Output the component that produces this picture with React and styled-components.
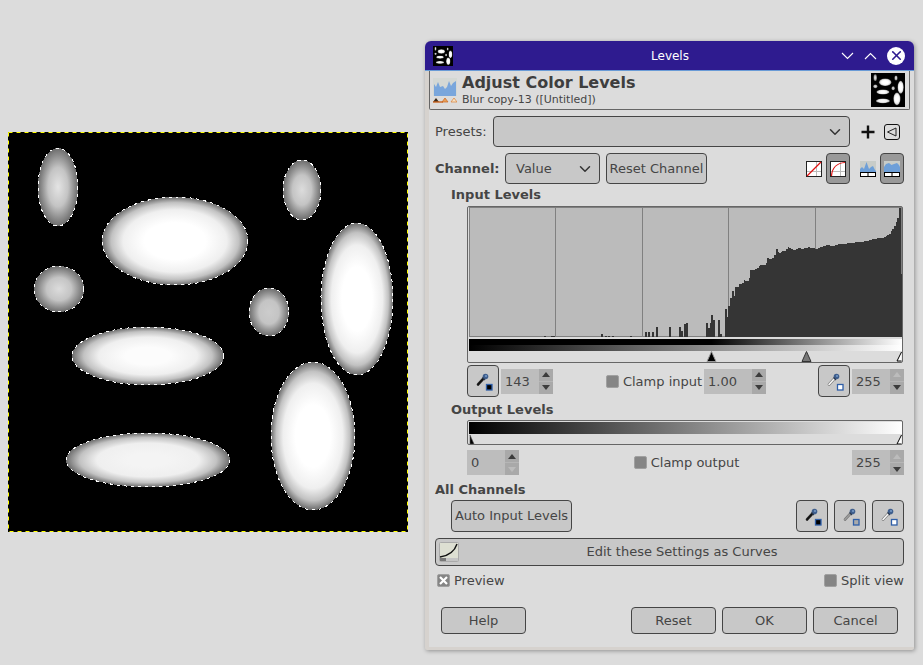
import React from "react";
import styled, { createGlobalStyle } from "styled-components";
import { LuChevronDown, LuX } from "react-icons/lu";

const GlobalStyle = createGlobalStyle`
  html, body {
    margin: 0;
    height: 100%;
    background: #dcdcdc;
    font-family: "DejaVu Sans", sans-serif;
    font-size: 13px;
    color: #454545;
  }
`;

const Desktop = styled.div`
  display: flex;
  align-items: flex-start;
  width: 923px;
  height: 665px;
  overflow: hidden;
`;

const CanvasWrap = styled.div`
  margin: 132px 17px 0 8px;
  width: 400px;
  height: 400px;
  flex: none;
`;

const Window = styled.div`
  margin-top: 41px;
  width: 489px;
  flex: none;
  box-sizing: border-box;
  background: #dcdcdc;
  border-left: 4px solid #d6d2ce;
  border-bottom: 3px solid #d6d2ce;
  border-radius: 6px 6px 2px 2px;
  box-shadow: 1px 1px 4px rgba(0, 0, 0, 0.35);
`;

const TitleBar = styled.div`
  display: grid;
  grid-template-columns: 1fr auto 1fr;
  align-items: center;
  height: 29px;
  margin-left: -4px;
  padding: 0 9px 0 8px;
  background: #2e1b8f;
  border-bottom: 1px solid #6a9bd6;
  border-radius: 6px 6px 0 0;
  color: #fff;
  font-size: 12px;
`;

const TitleIcon = styled.div`
  width: 20px;
  height: 20px;
  display: flex;
`;

const TitleText = styled.div`
  padding-left: 2px;
`;

const TitleControls = styled.div`
  display: flex;
  justify-content: flex-end;
  align-items: center;
  gap: 10px;

  svg {
    display: block;
  }
`;

const CloseDot = styled.span`
  width: 18px;
  height: 18px;
  border-radius: 50%;
  background: #fff;
  color: #2e1b8f;
  display: flex;
  align-items: center;
  justify-content: center;
  font-size: 15px;
`;

const Header = styled.div`
  display: flex;
  align-items: center;
  height: 39px;
  width: 481px;
  box-sizing: border-box;
  padding: 0 4px 0 3px;
  border: 1px solid #666;
  border-top: none;
  border-radius: 0 0 2px 2px;
`;

const HeaderText = styled.div`
  flex: 1;
  margin-left: 5px;
`;

const HeaderTitle = styled.div`
  font-size: 16px;
  font-weight: bold;
  line-height: 17px;
  margin-bottom: 2px;
  color: #3e3e3e;
`;

const HeaderSub = styled.div`
  font-size: 11px;
  line-height: 13px;
`;

const Content = styled.div`
  width: 481px;
  box-sizing: border-box;
  padding: 0 6px;
`;

const Row = styled.div`
  display: flex;
  align-items: center;
  justify-content: ${(p) => p.$justify || "flex-start"};
  gap: ${(p) => p.$gap || 0}px;
  margin-top: ${(p) => p.$top || 0}px;
  margin-left: ${(p) => p.$left || 0}px;
  padding: ${(p) => p.$pad || "0"};
  height: ${(p) => p.$h}px;
`;

const Group = styled.div`
  display: flex;
  align-items: center;
  gap: ${(p) => p.$gap || 0}px;
  margin-left: ${(p) => p.$left || 0}px;
`;

const BoldLabel = styled.div`
  font-weight: bold;
  line-height: 16px;
  height: 16px;
  flex: none;
  width: ${(p) => (p.$w ? `${p.$w}px` : "auto")};
  margin-top: ${(p) => p.$top || 0}px;
  margin-bottom: ${(p) => p.$bottom || 0}px;
  margin-left: ${(p) => p.$left || 0}px;
`;

const Combo = styled.div`
  display: flex;
  align-items: center;
  justify-content: space-between;
  box-sizing: border-box;
  width: ${(p) => p.$w}px;
  height: 31px;
  padding: 0 5px 0 10px;
  margin-left: ${(p) => p.$left || 0}px;
  background: #c8c8c8;
  border: 1px solid #454545;
  border-radius: 4px;
  color: #333;
  font-size: 18px;

  span {
    font-size: 13px;
    color: #454545;
  }
`;

const Btn = styled.div`
  display: flex;
  align-items: center;
  justify-content: center;
  box-sizing: border-box;
  width: ${(p) => p.$w}px;
  height: ${(p) => p.$h || 32}px;
  margin-left: ${(p) => p.$left || 0}px;
  padding-bottom: ${(p) => p.$lift || 0}px;
  background: #c8c8c8;
  border: 1px solid #454545;
  border-radius: 4px;
  white-space: nowrap;
`;

const ToggleBtn = styled(Btn)`
  width: 24px;
  height: 31px;
  background: #999;
`;

const SmallSquare = styled.div`
  width: 16px;
  height: 16px;
  margin-left: 8px;
  box-sizing: border-box;
  border: 1px solid #111;
  border-radius: 3px;
  display: flex;
`;

const LevelFrame = styled.div`
  margin-top: ${(p) => p.$top}px;
  margin-left: 32px;
  box-sizing: border-box;
  width: 436px;
  height: ${(p) => p.$h}px;
  padding: ${(p) => p.$pad || 0}px 0 0 1px;
  border: 1px solid #666;
  border-radius: 2px;
  display: flex;
  flex-direction: column;
`;

const Ramp = styled.div`
  width: 433px;
  height: 12px;
  flex: none;
  margin-top: ${(p) => p.$top || 0}px;
  background: ${(p) =>
    p.$split
      ? "linear-gradient(90deg,#000 56%,#fff 100%) top/100% 50% no-repeat,linear-gradient(90deg,#000,#fff) bottom/100% 50% no-repeat"
      : "linear-gradient(90deg,#000,#fff)"};
`;

const Spin = styled.div`
  display: flex;
  box-sizing: border-box;
  width: ${(p) => p.$w || 52}px;
  height: 25px;
  background: #bdbdbd;
`;

const SpinValue = styled.div`
  flex: 1;
  padding-left: 4px;
  line-height: 25px;
`;

const SpinArrows = styled.div`
  width: 14px;
  background: #a9a9a9;
  display: flex;
  flex-direction: column;
`;

const SpinArrow = styled.div`
  flex: 1;
  display: flex;
  align-items: center;
  justify-content: center;

  &::before {
    content: "";
    border-left: 4px solid transparent;
    border-right: 4px solid transparent;
    ${(p) => (p.$dir === "up" ? "border-bottom" : "border-top")}: 5px solid
      ${(p) => (p.$off ? "#bcbcbc" : "#3c3c3c")};
  }

  & + & {
    border-top: 1px solid #b6b6b6;
  }
`;

const Check = styled.span`
  width: 13px;
  height: 13px;
  box-sizing: border-box;
  flex: none;
  background: #858585;
  border: 1px solid #a0a0a0;
  border-radius: 2px;
  display: flex;
  align-items: center;
  justify-content: center;
`;

const CheckLabel = styled.label`
  display: flex;
  align-items: center;
  gap: 4px;
  margin-left: ${(p) => p.$left || 0}px;
`;

const EditIcon = styled.div`
  width: 20px;
  height: 20px;
  flex: none;
  margin-left: 3px;
  display: flex;
`;

const EditText = styled.div`
  flex: 1;
  text-align: center;
  padding-left: 2px;
`;

const blobs = [
  [58, 187, 20, 39, "#e4e4e4", 0],
  [175, 241, 73, 44, "#ffffff", 0.42],
  [302, 190, 19, 30, "#dcdcdc", 0],
  [357, 299, 36, 76, "#ffffff", 0.42],
  [59, 289, 25, 23, "#dcdcdc", 0],
  [269, 312, 20, 24, "#cccccc", 0],
  [148, 356, 76, 29, "#fcfcfc", 0.3],
  [313, 436, 42, 74, "#ffffff", 0.42],
  [148, 460, 82, 27, "#f4f4f4", 0.25],
];

function BlobField({ prefix, size, dashed }) {
  return (
    <svg width={size} height={size} viewBox="8 132 400 400" style={{ display: "block" }}>
      <defs>
        {blobs.map(([, , , , peak, flat], i) => (
          <radialGradient key={i} id={`${prefix}${i}`}>
            <stop offset="0" stopColor={peak} />
            <stop offset={flat} stopColor={peak} />
            <stop offset={flat + (1 - flat) * 0.5} stopColor={flat ? "#efefef" : "#c4c4c4"} />
            <stop offset={flat + (1 - flat) * 0.78} stopColor={flat ? "#c2c2c2" : "#929292"} />
            <stop offset="1" stopColor="#6c6c6c" />
          </radialGradient>
        ))}
      </defs>
      <rect x="8" y="132" width="400" height="400" fill="#000" />
      {blobs.map(([cx, cy, rx, ry], i) => (
        <ellipse
          key={i}
          cx={cx}
          cy={cy}
          rx={rx}
          ry={ry}
          fill={`url(#${prefix}${i})`}
          stroke={dashed ? "#fff" : "none"}
          strokeWidth="1"
          strokeDasharray="3 4"
          shapeRendering={dashed ? "crispEdges" : "auto"}
        />
      ))}
      {dashed && (
        <rect
          x="8.5"
          y="132.5"
          width="399"
          height="399"
          fill="none"
          stroke="#ff0"
          strokeWidth="1"
          strokeDasharray="4 4"
        />
      )}
    </svg>
  );
}

// x / top pairs read from the histogram, in 3x crop units
const sparse = [
  [252, 408], [273, 408], [278, 408], [423, 402], [435, 408], [443, 408], [455, 408], [510, 408],
  [555, 396], [565, 396], [575, 396], [587, 381], [627, 381], [657, 381], [663, 393], [672, 372],
  [678, 369], [738, 369], [744, 384], [749, 369], [753, 345], [759, 360], [774, 360], [780, 402],
];
const envelope = [
  [795, 325], [800, 350], [805, 318], [811, 288], [816, 270], [820, 288], [825, 260], [832, 260],
  [835, 252], [845, 252], [847, 238], [855, 242], [863, 242], [868, 228], [871, 210], [885, 210],
  [887, 202], [895, 202], [897, 193], [915, 193], [917, 187], [921, 172], [930, 178], [940, 170],
  [947, 145], [955, 158], [965, 152], [975, 148], [983, 142], [990, 146], [1000, 150], [1010, 145],
  [1030, 146], [1045, 140], [1065, 145], [1080, 140], [1100, 134], [1120, 136], [1150, 132],
  [1175, 130], [1200, 125], [1220, 122], [1240, 116], [1260, 113], [1280, 104], [1295, 90],
  [1305, 70], [1313, 50], [1318, 22],
];

function envelopeAt(x) {
  for (let i = 1; i < envelope.length; i++) {
    if (x <= envelope[i][0]) {
      const [x0, y0] = envelope[i - 1];
      const [x1, y1] = envelope[i];
      return y0 + ((y1 - y0) * (x - x0)) / (x1 - x0 || 1);
    }
  }
  return 22;
}

function Histogram() {
  const bars = [];
  for (let x = 795; x < 1318; x += 5.07) {
    const wobble = x > 950 && x < 1290 ? ((Math.round(x) * 7) % 5) - 2 : 0;
    bars.push([x, envelopeAt(x) + wobble]);
  }
  return (
    <svg
      width="433"
      height="130"
      viewBox="27 20 1299 390"
      preserveAspectRatio="none"
      shapeRendering="crispEdges"
      style={{ display: "block", flex: "none" }}
    >
      <rect x="27" y="20" width="1299" height="390" fill="#bbbbbb" stroke="#808080" strokeWidth="6" />
      {[287, 547, 805, 1066].map((x) => (
        <rect key={x} x={x - 1} y="20" width="3" height="390" fill="#808080" />
      ))}
      {sparse.map(([x, top]) => (
        <rect key={x} x={x} y={top} width="6" height={410 - top} fill="#353535" />
      ))}
      {bars.map(([x, top]) => (
        <rect key={x} x={x} y={top} width="5.4" height={410 - top} fill="#353535" />
      ))}
      <rect x="1318" y="22" width="6" height="388" fill="#353535" />
      <rect x="1324" y="222" width="3" height="188" fill="#353535" />
    </svg>
  );
}

// slider handles under a ramp: filled triangles plus the white one in the corner
function Handles({ items = [], height = 11, blackCorner }) {
  return (
    <svg width="433" height={height} style={{ display: "block", flex: "none" }}>
      {items.map(([x, fill]) => (
        <path
          key={x}
          d={`M${x} ${height - 10.5}L${x + 4.5} ${height - 0.5}H${x - 4.5}Z`}
          fill={fill}
          stroke={fill === "#000" ? "#999" : "#333"}
        />
      ))}
      {blackCorner && <path d="M1 1L5 10H1Z" fill="#000" stroke="#555" strokeWidth="0.6" />}
      <path d="M432.5 1L428 10H432.5" fill="#fff" stroke="#000" />
    </svg>
  );
}

function Dropper({ tone, square }) {
  const body = { black: "#111", grey: "#9a9a9a", white: "#f6f6f6" }[tone];
  return (
    <svg width="24" height="24" viewBox="0 0 24 24">
      <path d="M7 15.5 12.5 9.5" stroke={tone === "black" ? "#333" : "#777"} strokeWidth="2.6" strokeLinecap="round" />
      <path d="M7 15.5 12.5 9.5" stroke={body} strokeWidth="1.6" strokeLinecap="round" />
      <circle cx="14.5" cy="7.5" r="2.8" fill="#3f5f8e" />
      <circle cx="15" cy="7" r="1" fill="#7a9cc8" />
      <path d="M11.5 8.5 14 11" stroke="#2c3a50" strokeWidth="1.3" />
      <rect x="15.5" y="15.5" width="5.5" height="5.5" fill={square} stroke="#2f5fa8" strokeWidth="1.3" />
    </svg>
  );
}

function CurveIcon({ curved }) {
  return (
    <svg width="16" height="16" viewBox="0 0 16 16" shapeRendering={curved ? "auto" : "crispEdges"}>
      <rect x="0.5" y="0.5" width="15" height="15" fill="#fff" stroke="#222" />
      <path d="M10.5 1V15M1 10.5H15" stroke="#bbb" />
      {curved ? (
        <path d="M1.5 15C2 7 7 2 15 1.5" fill="none" stroke="#e01010" strokeWidth="1.2" />
      ) : (
        <path d="M1 15L15 1" stroke="#e01010" strokeWidth="1.3" shapeRendering="auto" />
      )}
    </svg>
  );
}

function HistIcon({ log }) {
  const d = log
    ? "M0 12V6L2 3 5 2 7.5 4 10 3 13 2 15 4 16 6V12Z"
    : "M0 12V8L2 6 4 8 6.5 1 9 8 11 6 13 5 15 9 16 10V12Z";
  return (
    <svg width="16" height="16" viewBox="0 0 16 16">
      <rect width="16" height="12" fill="#c8ccc8" />
      <path d={d} fill="#6d9fd8" />
      <rect x="0.5" y="11.5" width="15" height="4" fill="#fff" stroke="#000" />
      <path d="M8 11V16" stroke="#000" />
    </svg>
  );
}

function LevelsLogo() {
  return (
    <svg width="24" height="25" viewBox="0 0 24 25" style={{ flex: "none" }}>
      <rect width="24" height="18" fill="#d4d8d4" />
      <path d="M1 18V6L3 9 5 4 7 9 10 8 12 11 14 9 16 3 18 8 20 5 23 3V18Z" fill="#79a6dc" />
      <path d="M0 24 3 20 6 24Z" fill="#3a2a1a" />
      <path d="M9 24 12 20 15 24Z" fill="#e9a15a" stroke="#c9641f" strokeWidth="0.7" />
      <path d="M18 24 21 20 24 24Z" fill="#f5e3c8" stroke="#dd8030" strokeWidth="0.7" />
      <path d="M0 24H10" stroke="#c9641f" strokeWidth="1.4" />
    </svg>
  );
}

function CurveSetting() {
  return (
    <svg width="20" height="20" viewBox="0 0 20 20">
      <rect x="0.5" y="0.5" width="19" height="19" rx="1" fill="#dddfd2" stroke="#aaa" />
      <path d="M1 15C8 14 15 11 18 2" fill="none" stroke="#111" strokeWidth="1.4" />
      <rect x="1" y="16" width="18" height="3" fill="#c4c4c4" />
      <rect x="1" y="16" width="6" height="3" fill="#777" />
    </svg>
  );
}

const Chevron = ({ up }) => (
  <svg width="13" height="8" viewBox="0 0 13 8">
    <path d={up ? "M1 7 6.5 1.5 12 7" : "M1 1 6.5 6.5 12 1"} fill="none" stroke="#fff" strokeWidth="1.1" />
  </svg>
);

const SpinBox = ({ value, w, upOff, downOff }) => (
  <Spin $w={w}>
    <SpinValue>{value}</SpinValue>
    <SpinArrows>
      <SpinArrow $dir="up" $off={upOff} />
      <SpinArrow $dir="down" $off={downOff} />
    </SpinArrows>
  </Spin>
);

export default function App() {
  return (
    <Desktop>
      <GlobalStyle />
      <CanvasWrap>
        <BlobField prefix="main" size={400} dashed />
      </CanvasWrap>
      <Window>
        <TitleBar>
          <TitleIcon>
            <BlobField prefix="tiny" size={20} />
          </TitleIcon>
          <TitleText>Levels</TitleText>
          <TitleControls>
            <Chevron />
            <Chevron up />
            <CloseDot>
              <LuX strokeWidth={2.6} />
            </CloseDot>
          </TitleControls>
        </TitleBar>
        <Header>
          <LevelsLogo />
          <HeaderText>
            <HeaderTitle>Adjust Color Levels</HeaderTitle>
            <HeaderSub>Blur copy-13 ([Untitled])</HeaderSub>
          </HeaderText>
          <BlobField prefix="thumb" size={34} />
        </Header>
        <Content>
          <Row $h={31} $top={6}>
            <div>Presets:</div>
            <Combo $w={357} $left={6}>
              <span />
              <LuChevronDown />
            </Combo>
            <svg width="16" height="16" viewBox="0 0 16 16" style={{ marginLeft: 10 }}>
              <path d="M8 1.5V14.5M1.5 8H14.5" stroke="#111" strokeWidth="2.4" />
            </svg>
            <SmallSquare>
              <svg width="14" height="14" viewBox="0 0 14 14">
                <path d="M2.5 7 11 3V11Z" fill="none" stroke="#222" />
              </svg>
            </SmallSquare>
          </Row>
          <Row $h={31} $top={6}>
            <BoldLabel $w={64}>Channel:</BoldLabel>
            <Combo $w={95} $left={6}>
              <span>Value</span>
              <LuChevronDown />
            </Combo>
            <Btn $w={101} $h={31} $left={6}>Reset Channel</Btn>
            <Group $left={99} $gap={4}>
              <CurveIcon />
              <ToggleBtn><CurveIcon curved /></ToggleBtn>
            </Group>
            <Group $left={10} $gap={4}>
              <HistIcon />
              <ToggleBtn><HistIcon log /></ToggleBtn>
            </Group>
          </Row>
          <BoldLabel $top={3} $bottom={-1} $left={16}>Input Levels</BoldLabel>
          <LevelFrame $top={4} $h={157}>
            <Histogram />
            <Ramp $top={2} $split />
            <Handles items={[[242.5, "#000"], [337.5, "#777"]]} />
          </LevelFrame>
          <Row $h={32} $top={2} $left={32} $justify="space-between">
            <Group $gap={2}>
              <Btn $w={32}><Dropper tone="black" square="#000" /></Btn>
              <SpinBox value="143" />
            </Group>
            <Group $gap={2} $left={1}>
              <CheckLabel><Check />Clamp input</CheckLabel>
              <SpinBox value="1.00" w={62} />
            </Group>
            <Group $gap={2}>
              <Btn $w={32}><Dropper tone="white" square="#fff" /></Btn>
              <SpinBox value="255" upOff />
            </Group>
          </Row>
          <BoldLabel $top={5} $bottom={-1} $left={16}>Output Levels</BoldLabel>
          <LevelFrame $top={3} $h={25} $pad={1}>
            <Ramp />
            <Handles height={10} blackCorner />
          </LevelFrame>
          <Row $h={25} $top={5} $left={32} $justify="space-between">
            <SpinBox value="0" downOff />
            <CheckLabel $left={2}><Check />Clamp output</CheckLabel>
            <SpinBox value="255" upOff />
          </Row>
          <BoldLabel $top={7} $bottom={-1}>All Channels</BoldLabel>
          <Row $h={32} $top={3} $left={16} $justify="space-between">
            <Btn $w={121} $lift={2}>Auto Input Levels</Btn>
            <Group $gap={6}>
              <Btn $w={32}><Dropper tone="black" square="#000" /></Btn>
              <Btn $w={32}><Dropper tone="grey" square="#aaa" /></Btn>
              <Btn $w={32}><Dropper tone="white" square="#fff" /></Btn>
            </Group>
          </Row>
          <Row $h={28} $top={6}>
            <Btn $w={469} $h={28} $lift={1}>
              <EditIcon><CurveSetting /></EditIcon>
              <EditText>Edit these Settings as Curves</EditText>
            </Btn>
          </Row>
          <Row $h={16} $top={6} $pad="0 0 0 2px" $justify="space-between">
            <CheckLabel>
              <Check>
                <svg width="9" height="9" viewBox="0 0 9 9">
                  <path d="M1 1 8 8M8 1 1 8" stroke="#fff" strokeWidth="2.2" />
                </svg>
              </Check>
              Preview
            </CheckLabel>
            <CheckLabel><Check />Split view</CheckLabel>
          </Row>
          <Row $h={27} $top={19} $pad="0 6px" $gap={6}>
            <Btn $w={85} $h={27}>Help</Btn>
            <Btn $w={85} $h={27} $left={99}>Reset</Btn>
            <Btn $w={85} $h={27}>OK</Btn>
            <Btn $w={85} $h={27}>Cancel</Btn>
          </Row>
          <Row $h={13} />
        </Content>
      </Window>
    </Desktop>
  );
}
